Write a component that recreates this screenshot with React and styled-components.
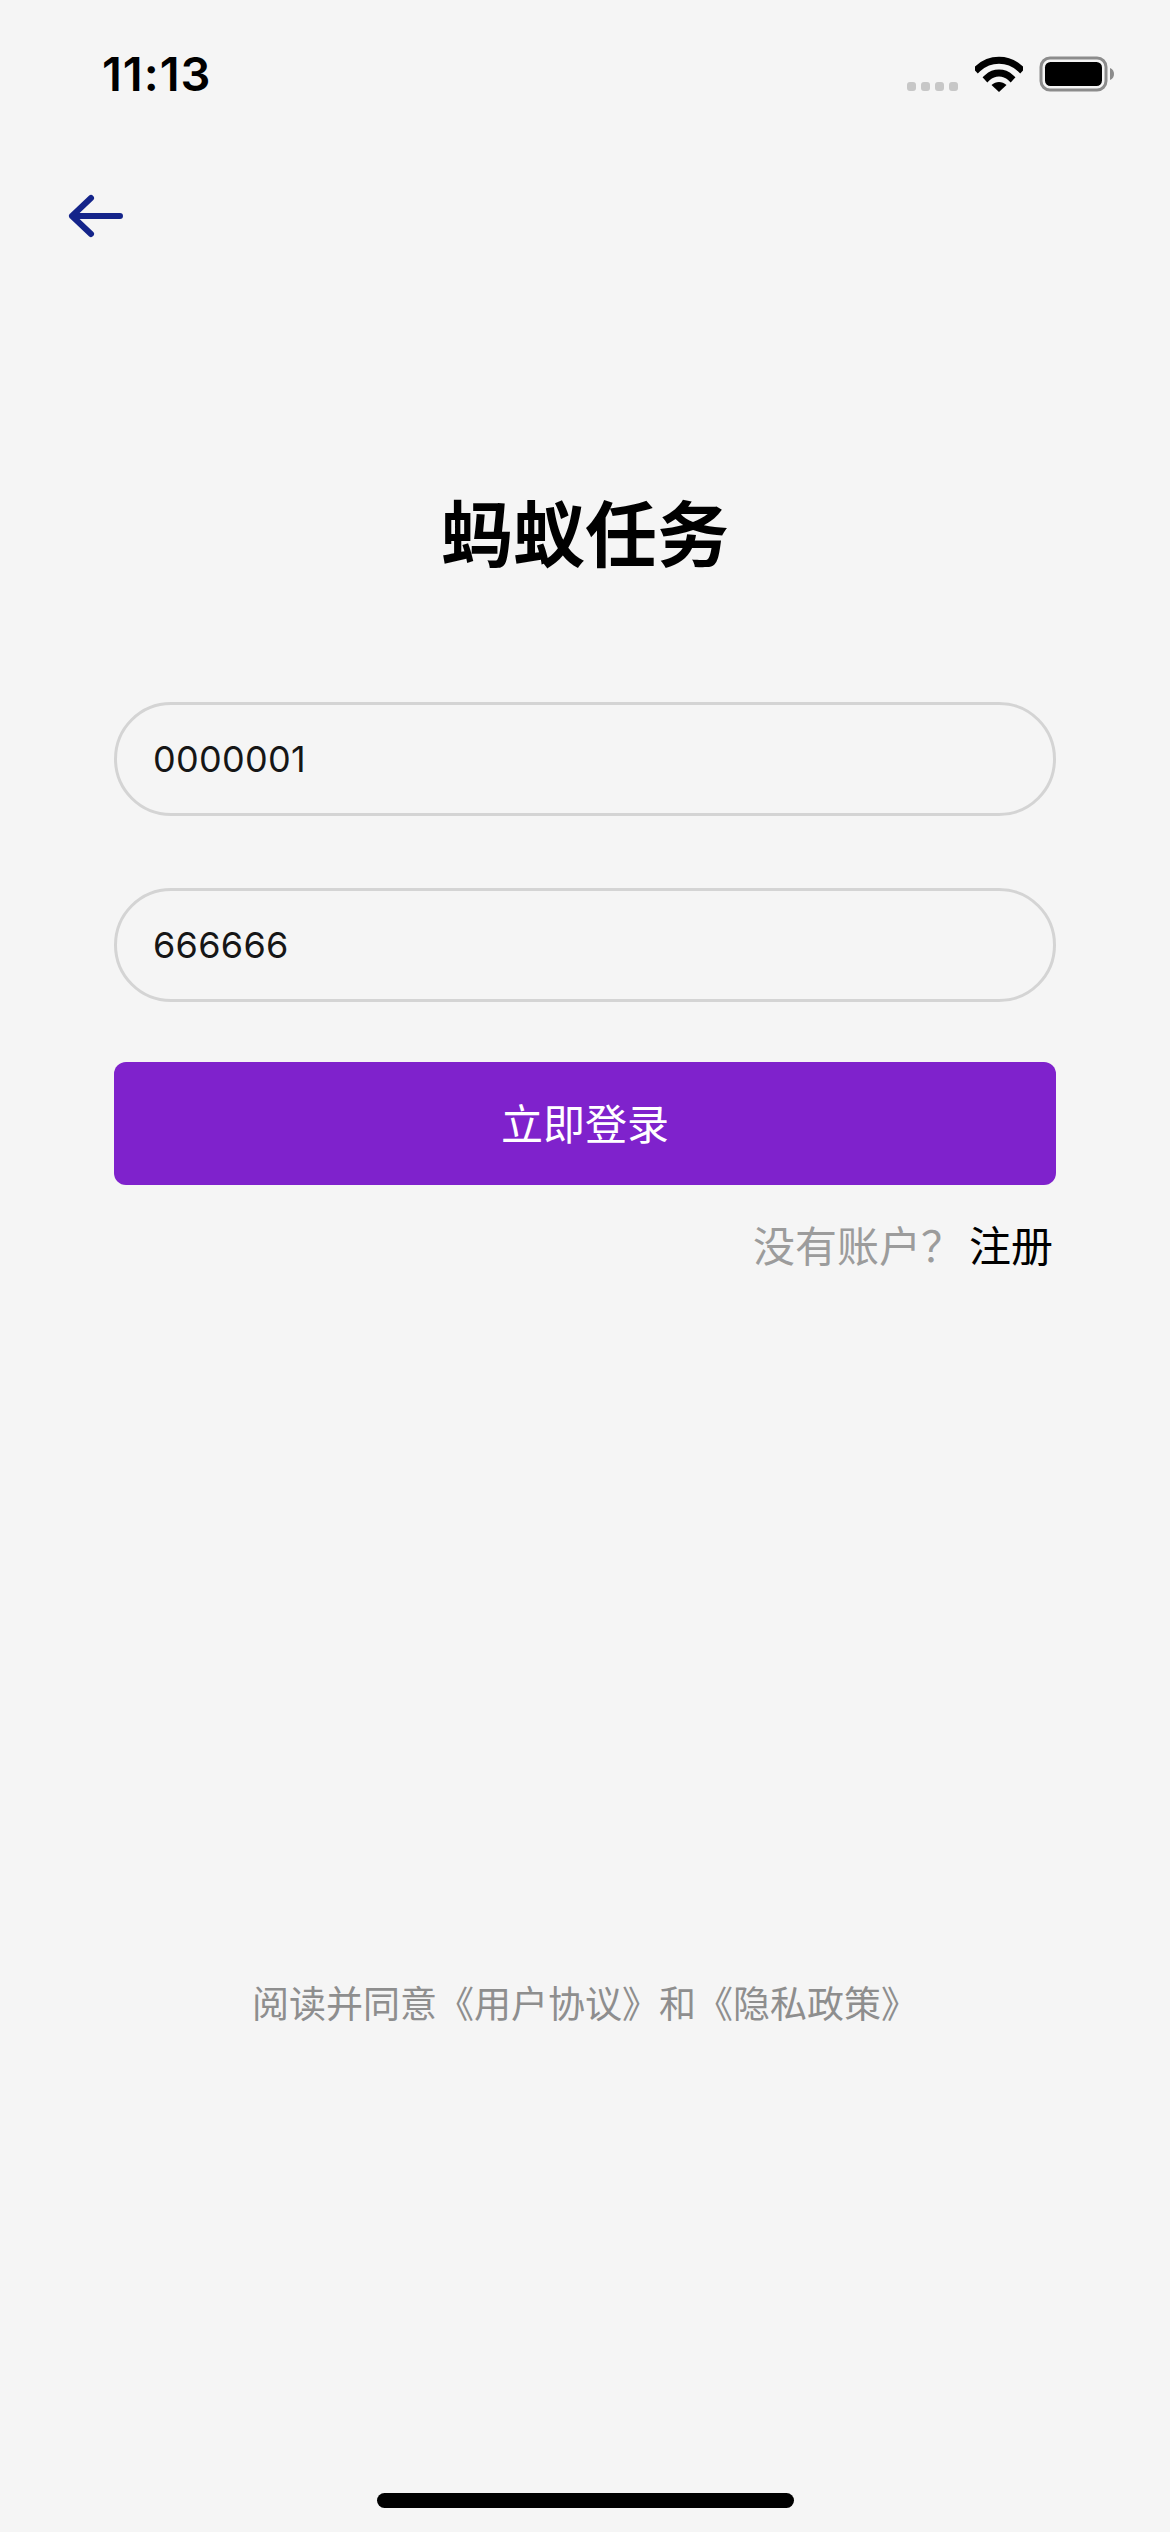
import React from 'react';
import styled, { createGlobalStyle } from 'styled-components';

const cjk = '"Inter", "Noto Sans CJK SC", sans-serif';

const GlobalStyle = createGlobalStyle`
  html, body {
    margin: 0;
    padding: 0;
    background: #f5f5f5;
  }
  * {
    box-sizing: border-box;
  }
`;

const Page = styled.div`
  width: 1170px;
  height: 2532px;
  display: flex;
  flex-direction: column;
  background: #f5f5f5;
  font-family: ${cjk};
  overflow: hidden;
`;

const StatusBar = styled.div`
  height: 100px;
  padding: 50px 55px 0 102px;
  display: flex;
  justify-content: space-between;
  align-items: flex-start;
`;

const Time = styled.div`
  font-size: 47px;
  line-height: 48px;
  font-weight: 600;
  letter-spacing: 1px;
  color: #000;
`;

const StatusIcons = styled.div`
  display: flex;
  align-items: flex-start;
  gap: 16px;
  padding-top: 6px;
`;

const SignalDots = styled.div`
  display: flex;
  gap: 5px;
  margin: 26px 1px 0 0;
`;

const Dot = styled.span`
  width: 9px;
  height: 9px;
  border-radius: 3px;
  background: #c7c7c7;
`;

const BackRow = styled.div`
  height: 70px;
  margin-top: 81px;
  padding-left: 67px;
  display: flex;
  align-items: center;
`;

const Title = styled.h1`
  margin: 234px 0 0;
  height: 100px;
  font-size: 72px;
  line-height: 100px;
  font-weight: 700;
  text-align: center;
  color: #000;
`;

const Form = styled.div`
  margin-top: 117px;
  padding: 0 114px;
  display: flex;
  flex-direction: column;
`;

const Field = styled.div`
  height: 114px;
  margin-bottom: ${p => p.$gap}px;
  padding: 0 36px;
  display: flex;
  align-items: center;
  border: 3px solid #d4d4d4;
  border-radius: 57px;
  font-size: 36px;
  letter-spacing: 0.3px;
  color: #161616;
`;

const LoginButton = styled.button`
  height: 123px;
  padding: 0 0 5px;
  border: 0;
  border-radius: 12px;
  background: #7f22cc;
  color: #fff;
  font-family: inherit;
  font-size: 42px;
  font-weight: 400;
`;

const SignupRow = styled.div`
  margin-top: 32px;
  padding-right: 3px;
  display: flex;
  justify-content: flex-end;
  font-size: 42px;
  line-height: 60px;
`;

const SignupHint = styled.span`
  color: #9c9c9c;
  margin-right: 6px;
`;

const SignupLink = styled.span`
  color: #000;
`;

const Agreement = styled.div`
  margin-top: 703px;
  height: 50px;
  font-size: 37px;
  line-height: 50px;
  text-align: center;
  color: #8e8e8e;
`;

const HomeBar = styled.div`
  width: 417px;
  height: 15px;
  margin: auto auto 24px;
  border-radius: 8px;
  background: #000;
`;

const WifiIcon = () => (
  <svg width="48" height="36" viewBox="0 0 48 36">
    <path d="M3 12.5C15 1.5 33 1.5 45 12.5" fill="none" stroke="#000" strokeWidth="7" strokeLinecap="square" />
    <path d="M12.5 21.5C19 15.5 29 15.5 35.5 21.5" fill="none" stroke="#000" strokeWidth="7" strokeLinecap="square" />
    <path d="M16.5 29L24 36L31.5 29C27 25 21 25 16.5 29Z" fill="#000" />
  </svg>
);

const BatteryIcon = () => (
  <svg width="76" height="36" viewBox="0 0 76 36">
    <rect x="2" y="2" width="65" height="32" rx="9" fill="none" stroke="#8c8c8c" strokeWidth="3" />
    <rect x="6" y="6" width="57" height="24" rx="5.5" fill="#000" />
    <path d="M71 12C74 13 75 15.5 75 18C75 20.5 74 23 71 24Z" fill="#8c8c8c" />
  </svg>
);

const BackArrow = () => (
  <svg width="60" height="50" viewBox="0 0 60 50">
    <path d="M24 7L5 25L24 43M5 25H53" fill="none" stroke="#14248a" strokeWidth="6" strokeLinecap="round" strokeLinejoin="round" />
  </svg>
);

export default function App() {
  return (
    <Page>
      <GlobalStyle />
      <StatusBar>
        <Time>11:13</Time>
        <StatusIcons>
          <SignalDots>
            <Dot />
            <Dot />
            <Dot />
            <Dot />
          </SignalDots>
          <WifiIcon />
          <BatteryIcon />
        </StatusIcons>
      </StatusBar>
      <BackRow>
        <BackArrow />
      </BackRow>
      <Title>蚂蚁任务</Title>
      <Form>
        <Field $gap={72}>0000001</Field>
        <Field $gap={60}>666666</Field>
        <LoginButton>立即登录</LoginButton>
        <SignupRow>
          <SignupHint>没有账户{'\uFF1F'}</SignupHint>
          <SignupLink>注册</SignupLink>
        </SignupRow>
      </Form>
      <Agreement>阅读并同意《用户协议》和《隐私政策》</Agreement>
      <HomeBar />
    </Page>
  );
}
